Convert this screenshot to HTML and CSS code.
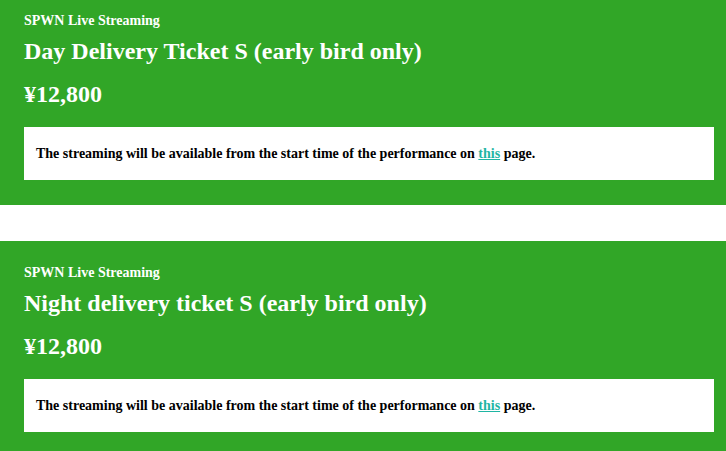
FILE: index.html
```html
<!DOCTYPE html>
<html>
<head>
<meta charset="utf-8">
<link rel="stylesheet" href="styles.css">
</head>
<body>
<div class="list">
  <section class="ticket first">
    <p class="label">SPWN Live Streaming</p>
    <h2 class="title">Day Delivery Ticket S (early bird only)</h2>
    <p class="price">¥12,800</p>
    <div class="notice">The streaming will be available from the start time of the performance on <a href="#">this</a> page.</div>
  </section>
  <section class="ticket">
    <p class="label">SPWN Live Streaming</p>
    <h2 class="title">Night delivery ticket S (early bird only)</h2>
    <p class="price">¥12,800</p>
    <div class="notice">The streaming will be available from the start time of the performance on <a href="#">this</a> page.</div>
  </section>
</div>
</body>
</html>
```
FILE: styles.css
```css
html, body {
  margin: 0;
  padding: 0;
  background: #ffffff;
  overflow: hidden;
}
body {
  font-family: "Liberation Serif", "Times New Roman", serif;
  font-weight: bold;
  color: #ffffff;
}
.list {
  display: flex;
  flex-direction: column;
  gap: 36px;
  margin-top: -11px;
}
.ticket {
  background: #31a627;
  padding: 24px 12px 25px 24px;
  display: flex;
  flex-direction: column;
}
.label {
  margin: 0;
  font-size: 14px;
  line-height: 16px;
}
.title {
  margin: 7px 0 0;
  font-size: 24px;
  line-height: 30px;
}
.price {
  margin: 13px 0 0;
  font-size: 24px;
  line-height: 30px;
}
.notice {
  margin-top: 18px;
  background: #ffffff;
  color: #000000;
  font-size: 14px;
  line-height: 53px;
  height: 53px;
  padding: 0 12px;
}
.notice a {
  color: #1fb5a3;
  text-decoration: underline;
}
```
